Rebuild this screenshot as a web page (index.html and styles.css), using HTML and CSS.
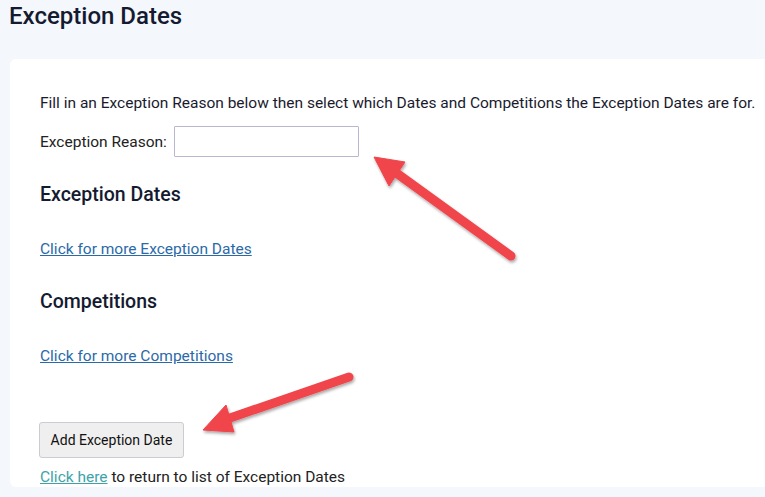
FILE: index.html
```html
<!DOCTYPE html>
<html>
<head>
<meta charset="utf-8">
<link rel="stylesheet" href="styles.css">
</head>
<body>
<div class="page">
  <h1 class="title">Exception Dates</h1>
  <div class="card">
    <p class="intro">Fill in an Exception Reason below then select which Dates and Competitions the Exception Dates are for.</p>
    <div class="field">
      <label class="label">Exception Reason:</label>
      <input class="input" type="text">
    </div>
    <h2 class="section first">Exception Dates</h2>
    <a class="link" href="#">Click for more Exception Dates</a>
    <h2 class="section">Competitions</h2>
    <a class="link" href="#">Click for more Competitions</a>
    <div class="actions">
      <button class="btn">Add Exception Date</button>
    </div>
    <p class="return"><a class="link-teal" href="#">Click here</a> to return to list of Exception Dates</p>
  </div>
</div>
<svg class="arrows" width="765" height="497" viewBox="0 0 765 497">
  <defs>
    <filter id="sh" x="-20%" y="-20%" width="140%" height="140%">
      <feDropShadow dx="1" dy="2" stdDeviation="1.5" flood-color="#000" flood-opacity="0.35"/>
    </filter>
  </defs>
  <g filter="url(#sh)" fill="#f0444b" stroke="#f0444b">
    <line x1="511" y1="256" x2="395" y2="172" stroke-width="9" stroke-linecap="round"/>
    <polygon points="374,157 405,162 389,186" stroke-width="1" stroke-linejoin="round"/>
    <line x1="349" y1="377" x2="230" y2="418" stroke-width="9" stroke-linecap="round"/>
    <polygon points="203,430 226,405 234,432" stroke-width="1" stroke-linejoin="round"/>
  </g>
</svg>
</body>
</html>
```
FILE: styles.css
```css
html, body {
  margin: 0;
  padding: 0;
  background: #f4f7fb;
  font-family: Roboto, "Liberation Sans", sans-serif;
  color: #1a1a2e;
  overflow: hidden;
}
.page {
  padding: 0 0 0 10px;
  height: 497px;
  box-sizing: border-box;
}
.title {
  margin: 0 0 0 -1px;
  padding-top: 2px;
  height: 59px;
  line-height: 28px;
  box-sizing: border-box;
  font-size: 24px;
  font-weight: 500;
  color: #141a30;
}
.card {
  background: #fff;
  border-radius: 6px 0 0 6px;
  padding: 34px 0 0 30px;
  height: 428px;
  box-sizing: border-box;
  font-size: 15.5px;
}
.intro {
  margin: 0 0 13px 0;
  line-height: 20px;
}
.field {
  display: flex;
  align-items: center;
  gap: 7px;
}
.label {
  color: #222;
}
.input {
  width: 185px;
  height: 31px;
  box-sizing: border-box;
  border: 1px solid #b9b6cf;
  border-radius: 1px;
  margin: 0;
}
.section {
  margin: 31px 0 32px 0;
  font-size: 19.5px;
  line-height: 24px;
  font-weight: 500;
  color: #141a30;
}
.section.first {
  margin-top: 26px;
}
.link {
  display: block;
  line-height: 20px;
  color: #2b6aa8;
  text-decoration: underline;
}
.actions {
  margin-top: 56px;
}
.btn {
  font-family: inherit;
  font-size: 14px;
  white-space: nowrap;
  color: #111;
  background: #efefef;
  border: 1px solid #c9ccd3;
  border-radius: 3px;
  padding: 0;
  height: 36px;
  width: 145px;
  margin-left: -1px;
  display: block;
}
.return {
  margin: 9px 0 0 0;
  line-height: 20px;
  color: #222;
}
.link-teal {
  color: #3ea3a8;
  text-decoration: underline;
}
.arrows {
  position: absolute;
  left: 0;
  top: 0;
  pointer-events: none;
}
```
